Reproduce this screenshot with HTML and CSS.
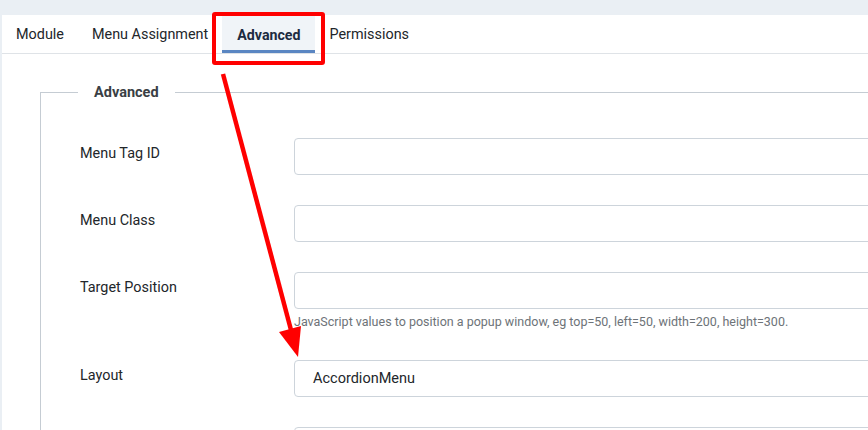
FILE: index.html
```html
<!DOCTYPE html>
<html lang="en">
  <head>
    <meta charset="UTF-8" />
    <meta name="viewport" content="width=device-width, initial-scale=1.0" />
    <title>Module - Advanced</title>
    <link rel="stylesheet" href="styles.css">
  </head>
  <body>
    <div id="panel">
      <ul class="tabs">
        <li class="tab">Module</li>
        <li class="tab">Menu Assignment</li>
        <li class="tab active">Advanced</li>
        <li class="tab">Permissions</li>
      </ul>

      <fieldset class="options">
        <legend>Advanced</legend>

        <div class="row">
          <label class="label">Menu Tag ID</label>
          <div class="field"><input type="text" class="input" /></div>
        </div>

        <div class="row">
          <label class="label">Menu Class</label>
          <div class="field"><input type="text" class="input" /></div>
        </div>

        <div class="row">
          <label class="label">Target Position</label>
          <div class="field">
            <input type="text" class="input" />
            <div class="help">JavaScript values to position a popup window, eg top=50, left=50, width=200, height=300.</div>
          </div>
        </div>

        <div class="row">
          <label class="label">Layout</label>
          <div class="field"><div class="input select">AccordionMenu</div></div>
        </div>

        <div class="row">
          <label class="label"></label>
          <div class="field"><input type="text" class="input" /></div>
        </div>
      </fieldset>
    </div>

    <!-- annotation -->
    <div class="highlight"></div>
    <svg class="arrow" width="868" height="430" viewBox="0 0 868 430">
      <line x1="223" y1="74" x2="291" y2="330" stroke="#f00" stroke-width="4.5" />
      <polygon points="279,332 301,326 298,357" fill="#f00" />
    </svg>
  </body>
</html>
```

FILE: styles.css
```css
* {
  box-sizing: border-box;
  margin: 0;
  padding: 0;
}
body {
  width: 868px;
  height: 430px;
  overflow: hidden;
  background: #eaeff4;
  font-family: Roboto, "Liberation Sans", sans-serif;
  color: #22262a;
  position: relative;
}
#panel {
  margin: 15px 0 0 2px;
  background: #fff;
  height: 415px;
  overflow: hidden;
}
.tabs {
  list-style: none;
  display: flex;
  height: 39px;
  border-bottom: 1px solid #dfe3e7;
}
.tab {
  padding: 2px 14px 0;
  font-size: 14.4px;
  line-height: 36px;
  color: #22262a;
}
.tab.active {
  padding: 2px 15px 0;
  font-size: 14.2px;
  font-weight: bold;
  color: #1c2b41;
  background: #f0f4f8;
  box-shadow: inset 0 -3px 0 #5a86c2;
}
.options {
  margin: 30px 0 0 38px;
  width: 1000px;
  border: 1px solid #c5ccd3;
  padding: 37px 0 0 39px;
}
.options legend {
  margin-left: -2px;
  padding: 0 16px;
  font-size: 14.5px;
  font-weight: bold;
  color: #3a3f45;
}
.row {
  display: flex;
  margin-bottom: 30px;
}
.label {
  width: 214px;
  flex-shrink: 0;
  font-size: 14.4px;
  padding-top: 7px;
  color: #22262a;
}
.field {
  flex: 1;
}
.input {
  display: block;
  width: 700px;
  height: 37px;
  border: 1px solid #cdd4db;
  border-radius: 4px;
  background: #fff;
  font-family: inherit;
  font-size: 14.5px;
  color: #22262a;
}
.select {
  padding: 0 18px;
  line-height: 35px;
}
.help {
  margin-top: 5px;
  font-size: 12.5px;
  color: #6d7378;
  line-height: 16px;
}
.highlight {
  position: absolute;
  left: 212px;
  top: 12px;
  width: 113px;
  height: 53px;
  border: 4.5px solid #f00;
  border-radius: 3px;
}
.arrow {
  position: absolute;
  left: 0;
  top: 0;
}
```
